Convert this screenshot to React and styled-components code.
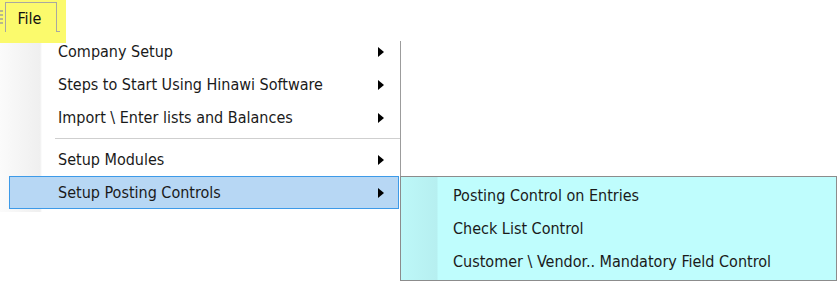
import React from "react";
import styled, { createGlobalStyle } from "styled-components";

const GlobalStyle = createGlobalStyle`
  html, body {
    margin: 0;
    padding: 0;
    background: #ffffff;
  }
  body {
    font-family: "DejaVu Sans Condensed", "DejaVu Sans", sans-serif;
    font-size: 16px;
    color: #1a1a1a;
  }
`;

const Page = styled.div`
  width: 838px;
  height: 281px;
  overflow: hidden;
  background: #fff;
`;

const TopBar = styled.div`
  height: 41px;
  display: flex;
  align-items: flex-start;
`;

const Highlight = styled.div`
  position: relative;
  z-index: 2;
  width: 66px;
  height: 43px;
  background: #fbfa6c;
  display: flex;
  align-items: flex-start;
  padding-top: 2px;
  box-sizing: border-box;
`;

const Grip = styled.div`
  width: 3px;
  height: 16px;
  margin-top: 8px;
  margin-right: 2px;
  background: repeating-linear-gradient(
    to bottom,
    #b9b88a 0,
    #b9b88a 2px,
    transparent 2px,
    transparent 4px
  );
`;

const FileTab = styled.div`
  position: relative;
  width: 52px;
  height: 30px;
  border: 1px solid #a8a8a0;
  border-bottom: none;
  box-sizing: border-box;
  display: flex;
  justify-content: center;
  padding: 6px 3px 0 0;
  font-size: 16px;
  color: #111;

  &::after {
    content: "";
    position: absolute;
    right: -4px;
    bottom: 0;
    width: 3px;
    height: 1px;
    background: #a8a8a0;
  }
`;

const Body = styled.div`
  display: flex;
  align-items: flex-start;
`;

const MainMenu = styled.div`
  width: 401px;
  box-sizing: border-box;
  border-right: 1px solid #9c9c9c;
  overflow: hidden;
  padding-bottom: 3px;
  background: linear-gradient(
    to right,
    #fbfbfb 0,
    #efefef 40px,
    #ffffff 42px
  );
`;

const Row = styled.div`
  height: 33px;
  box-sizing: border-box;
  margin: ${(p) => (p.$first ? "-6px" : "0")} 1px 0 9px;
  padding: 0 14px 0 48px;
  display: flex;
  align-items: center;
  justify-content: space-between;
  border: 1px solid ${(p) => (p.$active ? "#3d9ae8" : "transparent")};
  background: ${(p) => (p.$active ? "#b7d7f4" : "transparent")};
  white-space: nowrap;
`;

const Arrow = styled.span`
  width: 0;
  height: 0;
  border-top: 5px solid transparent;
  border-bottom: 5px solid transparent;
  border-left: 6px solid #000;
`;

const Separator = styled.div`
  height: 9px;
  display: flex;
  align-items: center;
  margin-left: 55px;

  &::before {
    content: "";
    flex: 1;
    height: 1px;
    background: #cfcfcf;
    box-shadow: 0 1px 0 #ffffff;
  }
`;

const SubMenu = styled.div`
  margin-top: 135px;
  margin-left: -1px;
  width: 437px;
  height: 105px;
  box-sizing: border-box;
  border: 1px solid #8c8c8c;
  padding-top: 2px;
  background: linear-gradient(
    to right,
    #bdf8f8 0,
    #b6eff0 36px,
    #bffdfd 37px
  );
`;

const SubRow = styled.div`
  height: 33px;
  display: flex;
  align-items: center;
  padding-left: 52px;
  white-space: nowrap;
`;

const mainItems = [
  { label: "Company Setup" },
  { label: "Steps to Start Using Hinawi Software" },
  { label: "Import \\ Enter lists and Balances" },
  { sep: true },
  { label: "Setup Modules" },
  { label: "Setup Posting Controls", active: true },
];

const subItems = [
  "Posting Control on Entries",
  "Check List Control",
  "Customer \\ Vendor.. Mandatory Field Control",
];

export default function App() {
  return (
    <Page>
      <GlobalStyle />
      <TopBar>
        <Highlight>
          <Grip />
          <FileTab>File</FileTab>
        </Highlight>
      </TopBar>
      <Body>
        <MainMenu>
          {mainItems.map((item, i) =>
            item.sep ? (
              <Separator key={i} />
            ) : (
              <Row key={i} $first={i === 0} $active={item.active}>
                <span>{item.label}</span>
                <Arrow />
              </Row>
            )
          )}
        </MainMenu>
        <SubMenu>
          {subItems.map((s) => (
            <SubRow key={s}>{s}</SubRow>
          ))}
        </SubMenu>
      </Body>
    </Page>
  );
}
